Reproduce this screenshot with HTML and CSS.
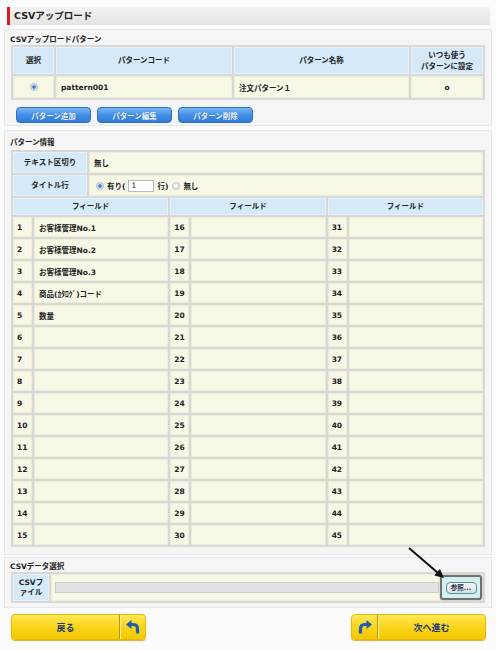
FILE: index.html
```html
<!DOCTYPE html>
<html lang="ja">
<head>
<meta charset="utf-8">
<title>CSVアップロード</title>
<link rel="stylesheet" href="styles.css">
</head>
<body>
<div class="page">
  <h1 class="title">CSVアップロード</h1>

  <section class="box box-pattern">
    <h2 class="box-label">CSVアップロードパターン</h2>
    <table class="grid pattern-table">
      <colgroup><col class="c-sel"><col class="c-code"><col class="c-name"><col></colgroup>
      <tr class="head-row">
        <th>選択</th><th>パターンコード</th><th>パターン名称</th><th>いつも使う<br>パターンに設定</th>
      </tr>
      <tr class="data-row">
        <td class="center"><span class="radio on"></span></td>
        <td>pattern001</td>
        <td>注文パターン１</td>
        <td class="center">o</td>
      </tr>
    </table>
    <div class="btn-row">
      <button class="blue-btn">パターン追加</button>
      <button class="blue-btn">パターン編集</button>
      <button class="blue-btn">パターン削除</button>
    </div>
  </section>

  <section class="box box-info">
    <h2 class="box-label">パターン情報</h2>
    <table class="grid info-table">
      <colgroup><col class="c-label"><col></colgroup>
      <tr class="info-row"><th>テキスト区切り</th><td>無し</td></tr>
      <tr class="info-row"><th>タイトル行</th><td>
        <span class="opt"><span class="radio on"></span>有り(<span class="num-input">1</span>行)<span class="radio off"></span>無し</span>
      </td></tr>
    </table>
    <table class="grid field-table">
      <colgroup><col class="c-num"><col><col class="c-num"><col><col class="c-num"><col></colgroup>
      <tr class="fhead"><th colspan="2">フィールド</th><th colspan="2">フィールド</th><th colspan="2">フィールド</th></tr>
      <tr><td>1</td><td>お客様管理No.1</td><td>16</td><td></td><td>31</td><td></td></tr>
      <tr><td>2</td><td>お客様管理No.2</td><td>17</td><td></td><td>32</td><td></td></tr>
      <tr><td>3</td><td>お客様管理No.3</td><td>18</td><td></td><td>33</td><td></td></tr>
      <tr><td>4</td><td>商品(ｶﾀﾛｸﾞ)コード</td><td>19</td><td></td><td>34</td><td></td></tr>
      <tr><td>5</td><td>数量</td><td>20</td><td></td><td>35</td><td></td></tr>
      <tr><td>6</td><td></td><td>21</td><td></td><td>36</td><td></td></tr>
      <tr><td>7</td><td></td><td>22</td><td></td><td>37</td><td></td></tr>
      <tr><td>8</td><td></td><td>23</td><td></td><td>38</td><td></td></tr>
      <tr><td>9</td><td></td><td>24</td><td></td><td>39</td><td></td></tr>
      <tr><td>10</td><td></td><td>25</td><td></td><td>40</td><td></td></tr>
      <tr><td>11</td><td></td><td>26</td><td></td><td>41</td><td></td></tr>
      <tr><td>12</td><td></td><td>27</td><td></td><td>42</td><td></td></tr>
      <tr><td>13</td><td></td><td>28</td><td></td><td>43</td><td></td></tr>
      <tr><td>14</td><td></td><td>29</td><td></td><td>44</td><td></td></tr>
      <tr><td>15</td><td></td><td>30</td><td></td><td>45</td><td></td></tr>
    </table>
  </section>

  <section class="box box-csv">
    <h2 class="box-label">CSVデータ選択</h2>
    <table class="grid csv-table">
      <colgroup><col class="c-csv"><col></colgroup>
      <tr class="csv-row">
        <th>CSVフ<br>ァイル</th>
        <td class="file-cell">
          <div class="file-line">
            <span class="file-box"></span>
            <span class="browse-hl"><span class="browse-btn">参照...</span></span>
          </div>
        </td>
      </tr>
    </table>
  </section>

  <div class="nav-row">
    <button class="ybtn">
      <span class="ybtn-text">戻る</span>
      <span class="ybtn-icon icon-right">
        <svg width="14" height="14" viewBox="0 0 14 14"><polygon points="0,4.5 5.5,0 5.5,9" fill="#1e5db3"/><path d="M5 4.5 H7.5 Q11.5 4.5 11.5 9 V13.5" fill="none" stroke="#1e5db3" stroke-width="3.2"/></svg>
      </span>
    </button>
    <button class="ybtn">
      <span class="ybtn-icon icon-left">
        <svg width="14" height="14" viewBox="0 0 14 14"><polygon points="14,4.5 8.5,0 8.5,9" fill="#1e5db3"/><path d="M9 4.5 H6.5 Q2.5 4.5 2.5 9 V13.5" fill="none" stroke="#1e5db3" stroke-width="3.2"/></svg>
      </span>
      <span class="ybtn-text">次へ進む</span>
    </button>
  </div>
</div>

<svg class="pointer" width="50" height="45" viewBox="0 0 50 45">
  <line x1="9" y1="8" x2="38" y2="33" stroke="#111" stroke-width="2"/>
  <polygon points="44,38 34.3,35.4 39.9,28.9" fill="#111"/>
</svg>
</body>
</html>
```

FILE: styles.css
```css
* { box-sizing: border-box; }
html, body { margin: 0; padding: 0; }
body {
  width: 496px;
  height: 650px;
  overflow: hidden;
  position: relative;
  background: #fbfbfb;
  font-family: "DejaVu Sans", "Noto Sans CJK JP", sans-serif;
  font-size: 7.5px;
  font-weight: bold;
  color: #222;
}
.page { padding: 7px 4px 0; }

.title {
  margin: 0 2px 0 3px;
  height: 18px;
  border-left: 3px solid #e3141b;
  background: linear-gradient(#f3f3f3, #e3e3e3);
  font-size: 9.5px;
  line-height: 18px;
  padding-left: 4px;
  font-weight: bold;
  color: #222;
}

.box {
  margin-top: 4px;
  border: 1px solid #e7e7e7;
  background: #f5f5f5;
  padding: 5px 6px 2px;
}
.box-info { padding: 7px 6px 7px; }
.box-csv { margin-top: 2px; padding: 4px 6px 4px; }
.box-label {
  margin: 0;
  font-size: 7.5px;
  line-height: 10px;
  height: 10px;
  font-weight: bold;
  margin-left: -1px;
}

.grid {
  width: 100%;
  border-collapse: separate;
  border-spacing: 2px;
  background: #d8d8d8;
  table-layout: fixed;
}
.grid th, .grid td {
  padding: 0 4px;
  font-size: 7.5px;
  font-weight: bold;
  color: #222;
  vertical-align: middle;
}
.grid th {
  background: #d5e9f8;
  border: 1px solid #e5f1fb;
  text-align: center;
  line-height: 11px;
}
.grid td {
  background: #f7f7e6;
  border: 1px solid #eeeed8;
  text-align: left;
}
.grid td.center { text-align: center; }

.pattern-table { margin-top: 0; }
.c-sel { width: 41px; }
.c-code { width: 176px; }
.c-name { width: 175px; }
.head-row th { height: 27px; }
.data-row td { height: 22px; }

.radio {
  display: inline-block;
  width: 8px;
  height: 8px;
  border-radius: 50%;
  vertical-align: middle;
  border: 1px solid #b8c0c8;
}
.radio.on { background: radial-gradient(circle at 50% 50%, #2f6fc0 0, #4f8fd8 35%, #c8d8ea 45%, #eef2f6 100%); }
.radio.off { background: radial-gradient(circle at 40% 40%, #ffffff 0, #dadada 100%); }

.btn-row {
  display: flex;
  gap: 6px;
  margin-top: 7px;
  padding-left: 5px;
}
.blue-btn {
  width: 75px;
  height: 16px;
  padding: 0;
  border: 1px solid #2d6fc6;
  border-radius: 4px;
  background: linear-gradient(#78b6f2, #4590e4 50%, #2f7bd8);
  color: #eef5ff;
  font-family: "DejaVu Sans", "Noto Sans CJK JP", sans-serif;
  font-size: 7.5px;
  font-weight: bold;
  text-shadow: 0 0 1px #1d5fb0;
}

.info-table { margin-top: 2px; }
.c-label { width: 74px; }
.info-row th, .info-row td { height: 21px; }
.opt { display: inline-flex; align-items: center; gap: 2px; padding-left: 2px; }
.opt .radio { margin-right: 1px; }
.opt .radio.off { margin-left: 2px; }
.num-input {
  display: inline-block;
  width: 26px;
  height: 12px;
  background: #fff;
  border: 1px solid #bbb;
  font-weight: normal;
  line-height: 10px;
  padding-left: 2px;
  margin: 0 1px;
}

.field-table { margin-top: -2px; }
.c-num { width: 19px; }
.fhead th { height: 17px; }
.field-table td { height: 20px; }
.field-table td:nth-child(odd) { padding: 0 3px; }

.c-csv { width: 36px; }
.csv-row th, .csv-row td { height: 27px; }
.csv-row th { line-height: 10px; }
.grid td.file-cell { padding: 0 0 0 3px; }
.file-line { display: flex; align-items: center; }
.file-box {
  flex: 1;
  height: 11px;
  background: #e2e2e2;
  border: 1px solid #cdcdcd;
}
.browse-hl {
  width: 42px;
  height: 25px;
  margin-left: 1px;
  border: 2px solid #707070;
  border-radius: 3px;
  background: #d2f1ef;
  box-shadow: 0 0 2px #999;
  display: flex;
  align-items: center;
  justify-content: center;
}
.browse-btn {
  width: 31px;
  height: 12px;
  border: 1px solid #6d8796;
  border-radius: 4px;
  background: linear-gradient(#f2f6f8, #d6e2ea);
  font-size: 6.5px;
  line-height: 10px;
  text-align: center;
  color: #2a3a4a;
}

.nav-row {
  display: flex;
  justify-content: space-between;
  margin-top: 6px;
  padding: 0 6px 0 7px;
}
.ybtn {
  display: flex;
  align-items: stretch;
  width: 135px;
  height: 26px;
  padding: 0;
  border: 1px solid #e4b900;
  border-radius: 4px;
  background: linear-gradient(#ffe95a, #fad61e 45%, #f4c800);
  box-shadow: 0 1px 1px #d4b040;
  font-family: "DejaVu Sans", "Noto Sans CJK JP", sans-serif;
  font-size: 9px;
  font-weight: bold;
  color: #1d3b74;
}
.ybtn-text {
  flex: 1;
  display: flex;
  align-items: center;
  justify-content: center;
}
.ybtn-icon {
  width: 26px;
  display: flex;
  align-items: center;
  justify-content: center;
}
.icon-right { border-left: 1px solid #b8961c; box-shadow: inset 1px 0 0 #fff2a0; }
.icon-left { border-right: 1px solid #b8961c; box-shadow: 1px 0 0 #fff2a0; }

.pointer {
  position: absolute;
  left: 400px;
  top: 540px;
}
```
